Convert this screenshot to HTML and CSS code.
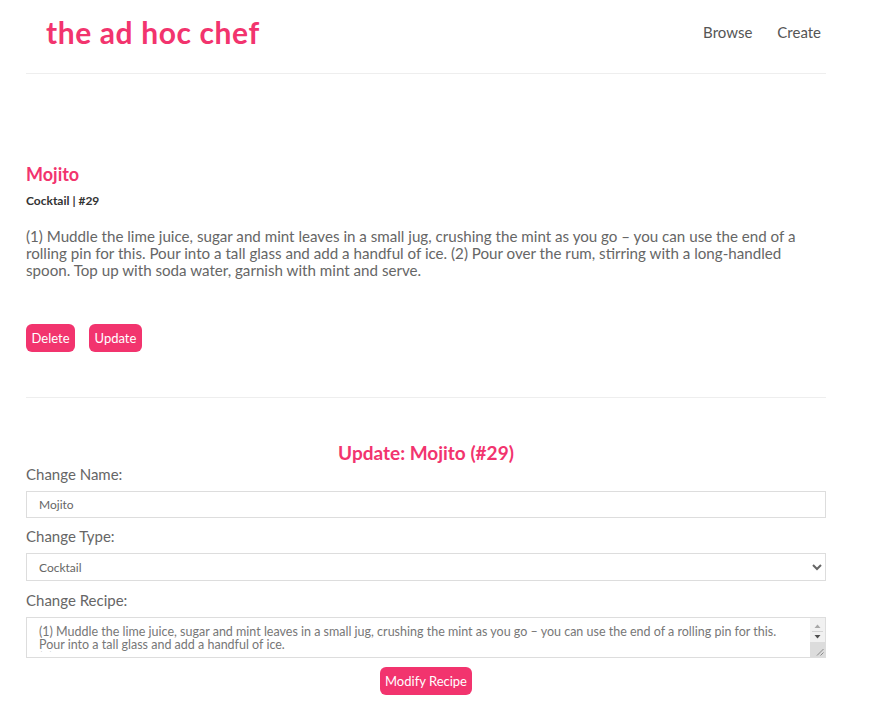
FILE: index.html
```html
<!DOCTYPE html>
<html>
<head>
<meta charset="utf-8">
<title>the ad hoc chef</title>
<link rel="stylesheet" href="styles.css">
</head>
<body>
<div class="page">
  <header class="header">
    <div class="logo">the ad hoc chef</div>
    <nav class="nav">
      <a href="#">Browse</a>
      <a href="#">Create</a>
    </nav>
  </header>
  <hr class="rule">
  <section class="recipe">
    <h2 class="title">Mojito</h2>
    <div class="meta">Cocktail | #29</div>
    <p class="text">(1) Muddle the lime juice, sugar and mint leaves in a small jug, crushing the mint as you go – you can use the end of a rolling pin for this. Pour into a tall glass and add a handful of ice. (2) Pour over the rum, stirring with a long-handled spoon. Top up with soda water, garnish with mint and serve.</p>
    <div class="actions">
      <button class="btn">Delete</button>
      <button class="btn">Update</button>
    </div>
  </section>
  <hr class="rule rule2">
  <form class="form">
    <h2 class="form-title">Update: Mojito (#29)</h2>
    <label class="label" for="name">Change Name:</label>
    <input class="field" id="name" type="text" value="Mojito">
    <label class="label" for="type">Change Type:</label>
    <select class="field select" id="type"><option>Cocktail</option></select>
    <label class="label" for="recipe">Change Recipe:</label>
    <div class="area-box">
      <div class="area-clip">
        <textarea class="area" id="recipe" rows="4">(1) Muddle the lime juice, sugar and mint leaves in a small jug, crushing the mint as you go – you can use the end of a rolling pin for this. Pour into a tall glass and add a handful of ice.
(2) Pour over the rum, stirring with a long-handled spoon. Top up with soda water, garnish with mint and serve.</textarea>
      </div>
      <span class="sbar">
        <svg width="15" height="39" viewBox="0 0 15 39" xmlns="http://www.w3.org/2000/svg">
          <rect x="0" y="0" width="15" height="24" fill="#f1f1f1"/>
          <polygon points="4.5,10 10.5,10 7.5,6.5" fill="#a8a8a8"/>
          <line x1="2" y1="13.5" x2="13" y2="13.5" stroke="#d4d4d4" stroke-width="1"/>
          <polygon points="4.5,17 10.5,17 7.5,20.5" fill="#505050"/>
          <rect x="0" y="24" width="15" height="15" fill="#dcdcdc"/>
          <line x1="13.5" y1="31" x2="7" y2="37.5" stroke="#8a8a8a" stroke-width="1"/>
          <line x1="13.5" y1="34.5" x2="10.5" y2="37.5" stroke="#8a8a8a" stroke-width="1"/>
        </svg>
      </span>
    </div>
    <div class="submit-row"><button type="button" class="btn">Modify Recipe</button></div>
  </form>
</div>
</body>
</html>
```
FILE: styles.css
```css
* { box-sizing: border-box; }
html, body { margin: 0; padding: 0; background: #fff; }
body { font-family: "Lato", "Noto Sans", sans-serif; color: #666; }
.page { width: 800px; margin-left: 26px; }
.header { display: flex; align-items: center; justify-content: space-between; height: 65px; padding: 0 5px 2px 20px; }
.logo { font-size: 30px; font-weight: 700; color: #f2346e; letter-spacing: 0.6px; }
.nav { display: flex; gap: 25px; }
.nav a { color: #555; text-decoration: none; font-size: 15px; }
.rule { border: 0; border-top: 1px solid #eee; margin: 8px 0 0 0; }
.recipe { padding-top: 89px; }
.title { margin: 0; font-size: 18px; font-weight: 700; color: #f2346e; line-height: 22px; }
.meta { margin-top: 8px; font-size: 12px; font-weight: 700; color: #333; }
.text { margin: 20px 0 0 0; font-size: 15.15px; line-height: 17px; color: #666; }
.actions { display: flex; gap: 14px; margin-top: 45px; }
.btn { background: #f2346e; color: #fff; border: 0; border-radius: 6px; height: 28px; padding: 0 5.5px; font-family: inherit; font-size: 13px; }
.rule2 { margin-top: 45px; }
.form { display: flex; flex-direction: column; padding-top: 44px; }
.form-title { margin: 0 0 1px 0; text-align: center; font-size: 19px; font-weight: 700; color: #f2346e; line-height: 22px; }
.label { font-size: 15px; color: #666; margin-top: 0; height: 23px; line-height: 18px; }
.field { width: 800px; border: 1px solid #ddd; font-family: inherit; font-size: 12px; color: #666; padding: 0 12px; background: #fff; }
input.field { height: 27px; margin: 3px 0 9px; }
.select { height: 28px; margin: 3px 0 10px; padding-left: 8px; }
.area-box { position: relative; width: 800px; height: 41px; margin-top: 3px; border: 1px solid #ddd; background: #fff; }
.area-clip { height: 34px; overflow: hidden; }
.area { display: block; width: 100%; height: 60px; border: 0; margin: 0; padding: 7px 30px 0 12px; font-family: inherit; font-size: 12.5px; line-height: 13px; color: #777; background: transparent; overflow: hidden; resize: none; outline: none; }
.sbar { position: absolute; top: 0; right: 0; width: 15px; height: 39px; display: block; }
.sbar svg { display: block; }
.submit-row { display: flex; justify-content: center; margin-top: 9px; }
```
